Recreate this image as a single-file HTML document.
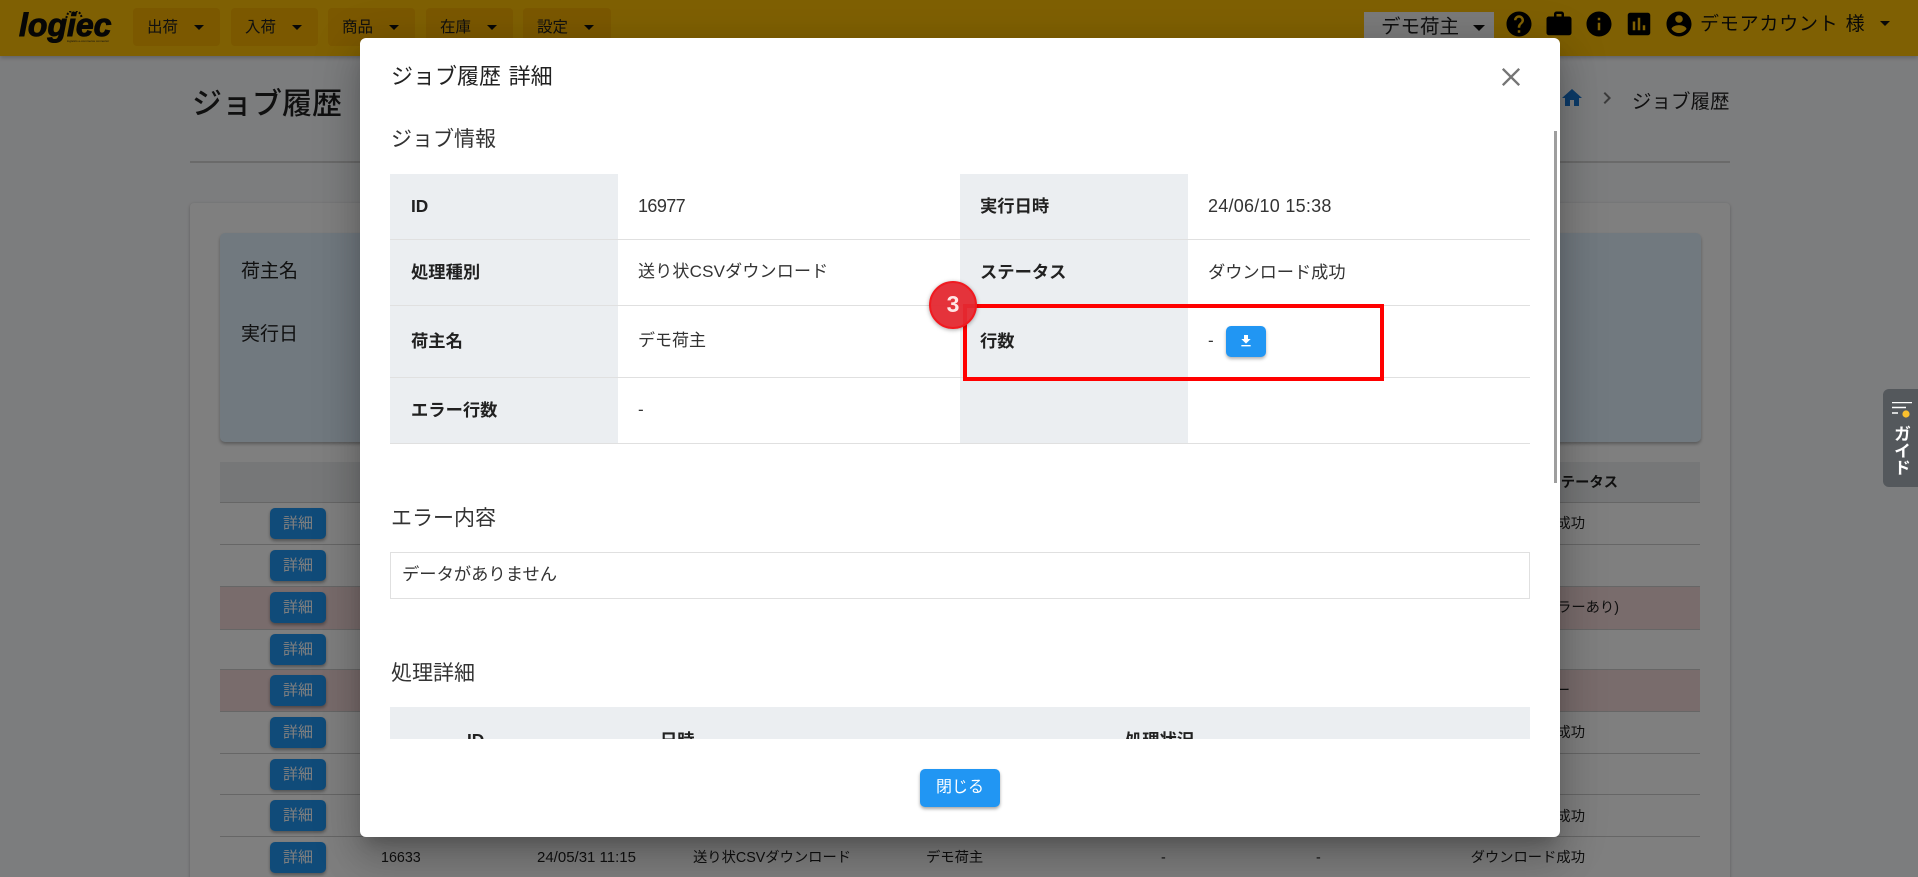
<!DOCTYPE html>
<html lang="ja">
<head>
<meta charset="utf-8">
<title>ジョブ履歴</title>
<style>
html,body{margin:0;padding:0;width:1918px;height:877px;overflow:hidden;background:#f9fafc}
body{font-family:"Liberation Sans","Noto Sans CJK JP",sans-serif;color:#212121;position:relative}
*{box-sizing:border-box}
.a{position:absolute;white-space:nowrap}
.t{position:absolute;white-space:nowrap;height:30px;line-height:30px}
svg{position:absolute;display:block}
.hdr{position:absolute;left:0;top:0;width:1918px;height:56px;background:#ffc107;box-shadow:0 2px 4px rgba(0,0,0,.2)}
.m{position:absolute;top:8px;height:38px;width:87px;background:#f6b000;border-radius:4px;font-size:15.5px;line-height:40px;padding-left:14px;color:#212121}
.caret{position:absolute;width:0;height:0;border-left:5px solid transparent;border-right:5px solid transparent;border-top:5px solid #111}
.m .caret{left:61px;top:17px}
.logo{position:absolute;left:19px;top:7px;font:italic 900 32px/36px "Liberation Sans",sans-serif;color:#0d0d0d;-webkit-text-stroke:1px #0d0d0d;letter-spacing:0}
.logosub{position:absolute;left:67px;top:39px;font-size:3px;line-height:4px;color:#222}
.dots{position:absolute;left:65px;top:11px}
.card{position:absolute;left:190px;top:203px;width:1540px;height:700px;background:#fff;border-radius:4px;box-shadow:0 1px 3px rgba(0,0,0,.25)}
.panel{position:absolute;left:220px;top:233px;width:1481px;height:209px;background:#e2f3ff;border-radius:5px;box-shadow:0 2px 3px rgba(0,0,0,.3)}
.row{position:absolute;left:220px;width:1480px;border-bottom:1px solid #ccc}
.err{background:#f2d8d8}
.btn{position:absolute;left:270px;width:56px;height:31px;background:#2196f3;border-radius:5px;color:#fff;font-size:15px;line-height:31px;text-align:center;box-shadow:0 2px 3px rgba(0,0,0,.35)}
.c{position:absolute;font-size:14.3px;height:24px;line-height:24px;white-space:nowrap}
.overlay{position:absolute;left:0;top:0;width:1918px;height:877px;background:rgba(0,0,0,.5)}
.guide{position:absolute;left:1883px;top:389px;width:35px;height:98px;background:#54585c;border-radius:6px 0 0 6px}
.guide .g{position:absolute;left:8px;top:36px;writing-mode:vertical-rl;font-size:17px;line-height:19px;font-weight:700;color:#fff;letter-spacing:0}
.modal{position:absolute;left:360px;top:38px;width:1200px;height:799px;background:#fff;border-radius:6px;box-shadow:0 11px 15px -7px rgba(0,0,0,.2),0 24px 38px 3px rgba(0,0,0,.14),0 9px 46px 8px rgba(0,0,0,.12)}
.th{position:absolute;background:#ebeef1}
.line{position:absolute;left:390px;width:1140px;height:1px;background:#e0e0e0}
.hd{font-size:17.3px;font-weight:700;color:#212121}
.td{font-size:17px;color:#333}
.sec{font-size:21px;color:#333}
</style>
</head>
<body>
<div class="hdr">
  <div class="logo">logiec</div>
  <svg class="dots" width="18" height="8" viewBox="0 0 18 8"><path d="M1.5 7A7.5 7.5 0 0 1 16.5 7" fill="none" stroke="#111" stroke-width="2" stroke-dasharray="2 1.4"/></svg>
  <div class="logosub">logistics e-commerce connector</div>
  <div class="m" style="left:133px">出荷<i class="caret"></i></div>
  <div class="m" style="left:231px">入荷<i class="caret"></i></div>
  <div class="m" style="left:328px">商品<i class="caret"></i></div>
  <div class="m" style="left:426px">在庫<i class="caret"></i></div>
  <div class="m" style="left:523px;width:88px">設定<i class="caret"></i></div>
  <div class="a" style="left:1364px;top:12px;width:130px;height:38px;background:#f5f5f5;font-size:19.5px;line-height:30px;padding-left:17px;color:#212121">デモ荷主<i class="caret" style="left:109px;top:13px;border-left-width:6px;border-right-width:6px;border-top-width:6px"></i></div>
  <svg style="left:1504px;top:9px" width="30" height="30" viewBox="0 0 24 24"><path fill="#000" d="M12 2C6.48 2 2 6.48 2 12s4.48 10 10 10 10-4.48 10-10S17.52 2 12 2zm1 17h-2v-2h2v2zm2.07-7.75l-.9.92C13.45 12.9 13 13.5 13 15h-2v-.5c0-1.1.45-2.1 1.17-2.83l1.24-1.26c.37-.36.59-.86.59-1.41 0-1.1-.9-2-2-2s-2 .9-2 2H8c0-2.21 1.79-4 4-4s4 1.79 4 4c0 .88-.36 1.68-.93 2.25z"/></svg>
  <svg style="left:1544px;top:9px" width="30" height="30" viewBox="0 0 24 24"><path fill="#000" d="M20 6h-4V4c0-1.11-.89-2-2-2h-4c-1.11 0-2 .89-2 2v2H4c-1.11 0-1.99.89-1.99 2L2 19c0 1.11.89 2 2 2h16c1.11 0 2-.89 2-2V8c0-1.11-.89-2-2-2zm-6 0h-4V4h4v2z"/></svg>
  <svg style="left:1584px;top:9px" width="30" height="30" viewBox="0 0 24 24"><path fill="#000" d="M12 2C6.48 2 2 6.48 2 12s4.48 10 10 10 10-4.48 10-10S17.52 2 12 2zm1 15h-2v-6h2v6zm0-8h-2V7h2v2z"/></svg>
  <svg style="left:1624px;top:9px" width="30" height="30" viewBox="0 0 24 24"><path fill="#000" d="M19 3H5c-1.1 0-2 .9-2 2v14c0 1.1.9 2 2 2h14c1.1 0 2-.9 2-2V5c0-1.1-.9-2-2-2zM9 17H7v-7h2v7zm4 0h-2V7h2v10zm4 0h-2v-4h2v4z"/></svg>
  <svg style="left:1664px;top:9px" width="30" height="30" viewBox="0 0 24 24"><path fill="#000" d="M12 2C6.48 2 2 6.48 2 12s4.48 10 10 10 10-4.48 10-10S17.52 2 12 2zm0 3c1.66 0 3 1.34 3 3s-1.34 3-3 3-3-1.34-3-3 1.34-3 3-3zm0 14.2c-2.5 0-4.71-1.28-6-3.22.03-1.99 4-3.08 6-3.08 1.99 0 5.97 1.09 6 3.08-1.29 1.94-3.5 3.22-6 3.22z"/></svg>
  <div class="t" style="left:1700px;top:10px;font-size:19px;letter-spacing:.8px;word-spacing:1px;color:#111">デモアカウント 様</div>
  <i class="caret" style="left:1880px;top:21px"></i>
</div>

<div class="t" style="left:192px;top:88px;font-size:30px;font-weight:500;height:34px;line-height:34px">ジョブ履歴</div>
<svg style="left:1560px;top:86px" width="24" height="24" viewBox="0 0 24 24"><path fill="#1976d2" d="M10 20v-6h4v6h5v-8h3L12 3 2 12h3v8z"/></svg>
<svg style="left:1595px;top:86px" width="24" height="24" viewBox="0 0 24 24"><path fill="#777" d="M10 6L8.59 7.41 13.17 12l-4.58 4.59L10 18l6-6z"/></svg>
<div class="t" style="left:1632px;top:87px;font-size:19.5px">ジョブ履歴</div>
<div class="a" style="left:190px;top:161px;width:1540px;height:2px;background:#d5d5d5"></div>

<div class="card"></div>
<div class="panel"></div>
<div class="t" style="left:241px;top:257px;font-size:19px">荷主名</div>
<div class="t" style="left:241px;top:320px;font-size:19px">実行日</div>

<div class="row" style="top:462px;height:41px;background:#eceff1"></div>
<div class="row" style="top:503px;height:42px"></div>
<div class="row" style="top:545px;height:42px"></div>
<div class="row err" style="top:587px;height:43px"></div>
<div class="row" style="top:630px;height:40px"></div>
<div class="row err" style="top:670px;height:42px"></div>
<div class="row" style="top:712px;height:42px"></div>
<div class="row" style="top:754px;height:41px"></div>
<div class="row" style="top:795px;height:42px"></div>

<div class="btn" style="top:508px">詳細</div>
<div class="btn" style="top:550px">詳細</div>
<div class="btn" style="top:592px">詳細</div>
<div class="btn" style="top:634px">詳細</div>
<div class="btn" style="top:675px">詳細</div>
<div class="btn" style="top:717px">詳細</div>
<div class="btn" style="top:759px">詳細</div>
<div class="btn" style="top:800px">詳細</div>
<div class="btn" style="top:842px">詳細</div>

<div class="c" style="top:471px;right:300px;font-weight:700">ステータス</div>
<div class="c" style="top:512px;right:333px">ダウンロード成功</div>
<div class="c" style="top:596px;right:299px">ダウンロード成功(エラーあり)</div>
<div class="c" style="top:679px;right:348px">データエラー</div>
<div class="c" style="top:721px;right:333px">ダウンロード成功</div>
<div class="c" style="top:805px;right:333px">ダウンロード成功</div>
<div class="c" style="top:846px;right:333px">ダウンロード成功</div>
<div class="a" style="left:381px;top:846px;font-size:14.3px;line-height:24px">16633</div>
<div class="a" style="left:537px;top:846px;font-size:15px;line-height:24px">24/05/31 11:15</div>
<div class="a" style="left:693px;top:846px;font-size:14.3px;line-height:24px">送り状CSVダウンロード</div>
<div class="a" style="left:926px;top:846px;font-size:14.3px;line-height:24px">デモ荷主</div>
<div class="a" style="left:1161px;top:846px;font-size:14.3px;line-height:24px">-</div>
<div class="a" style="left:1316px;top:846px;font-size:14.3px;line-height:24px">-</div>

<div class="overlay"></div>

<div class="guide">
  <svg style="left:9px;top:13px" width="24" height="20" viewBox="0 0 24 20"><path d="M0 0.5h20M0 5.5h14M0 11h6" stroke="#fff" stroke-width="1.6" fill="none"/><circle cx="14" cy="12" r="3.6" fill="#fbc02d"/></svg>
  <div class="g">ガイド</div>
</div>

<div class="modal"></div>
<div class="t" style="left:391px;top:62px;font-size:22px;word-spacing:1.5px;color:#222">ジョブ履歴 詳細</div>
<svg style="left:1499px;top:65px" width="24" height="24" viewBox="0 0 24 24"><path d="M3.8 3.8l16.4 16.4M20.2 3.8L3.8 20.2" stroke="#757575" stroke-width="2.4" fill="none"/></svg>
<div class="a" style="left:1554px;top:131px;width:3px;height:352px;background:#9e9e9e"></div>

<div class="t sec" style="left:391px;top:125px">ジョブ情報</div>

<div class="th" style="left:390px;top:174px;width:228px;height:269px"></div>
<div class="th" style="left:960px;top:174px;width:228px;height:269px"></div>
<div class="line" style="top:239px"></div>
<div class="line" style="top:305px"></div>
<div class="line" style="top:377px"></div>
<div class="line" style="top:443px"></div>

<div class="t hd" style="left:411px;top:191px">ID</div>
<div class="t td" style="left:638px;top:191px;font-size:18px;letter-spacing:-.6px">16977</div>
<div class="t hd" style="left:980px;top:191px">実行日時</div>
<div class="t td" style="left:1208px;top:191px;font-size:18px;letter-spacing:.25px">24/06/10 15:38</div>

<div class="t hd" style="left:411px;top:257px">処理種別</div>
<div class="t td" style="left:638px;top:257px;letter-spacing:.2px">送り状CSVダウンロード</div>
<div class="t hd" style="left:980px;top:257px">ステータス</div>
<div class="t td" style="left:1208px;top:257px;font-size:17.2px">ダウンロード成功</div>

<div class="t hd" style="left:411px;top:326px">荷主名</div>
<div class="t td" style="left:638px;top:326px">デモ荷主</div>
<div class="t hd" style="left:980px;top:326px">行数</div>
<div class="t td" style="left:1208px;top:326px">-</div>
<div class="a" style="left:1226px;top:326px;width:40px;height:31px;background:#2196f3;border-radius:5px;box-shadow:0 2px 3px rgba(0,0,0,.3)"></div>
<svg style="left:1238px;top:333px" width="16" height="16" viewBox="0 0 24 24"><path fill="#fff" d="M19 9h-4V3H9v6H5l7 7 7-7zM5 18v2h14v-2H5z"/></svg>

<div class="t hd" style="left:411px;top:395px">エラー行数</div>
<div class="t td" style="left:638px;top:395px">-</div>

<div class="t sec" style="left:391px;top:504px">エラー内容</div>
<div class="a" style="left:390px;top:552px;width:1140px;height:47px;border:1px solid #e0e0e0"></div>
<div class="t td" style="left:402px;top:559px;font-size:17.3px">データがありません</div>

<div class="t sec" style="left:391px;top:659px">処理詳細</div>
<div class="a" style="left:390px;top:707px;width:1140px;height:32px;background:#ebeef1;overflow:hidden">
  <div class="t hd" style="left:77px;top:18px">ID</div>
  <div class="t hd" style="left:270px;top:18px">日時</div>
  <div class="t hd" style="left:735px;top:18px">処理状況</div>
</div>

<div class="a" style="left:920px;top:769px;width:80px;height:38px;background:#2196f3;border-radius:5px;color:#fff;font-size:16px;line-height:38px;text-align:center;box-shadow:0 2px 3px rgba(0,0,0,.35)">閉じる</div>

<div class="a" style="left:963px;top:304px;width:421px;height:77px;border:4px solid #f00"></div>
<div class="a" style="left:929px;top:281px;width:48px;height:48px;border-radius:50%;background:rgba(228,40,48,.95);border:2px solid #f01a20;box-shadow:0 1px 4px rgba(0,0,0,.35);color:#ffe5e5;font-size:23px;font-weight:700;line-height:42px;text-align:center">3</div>
</body>
</html>
